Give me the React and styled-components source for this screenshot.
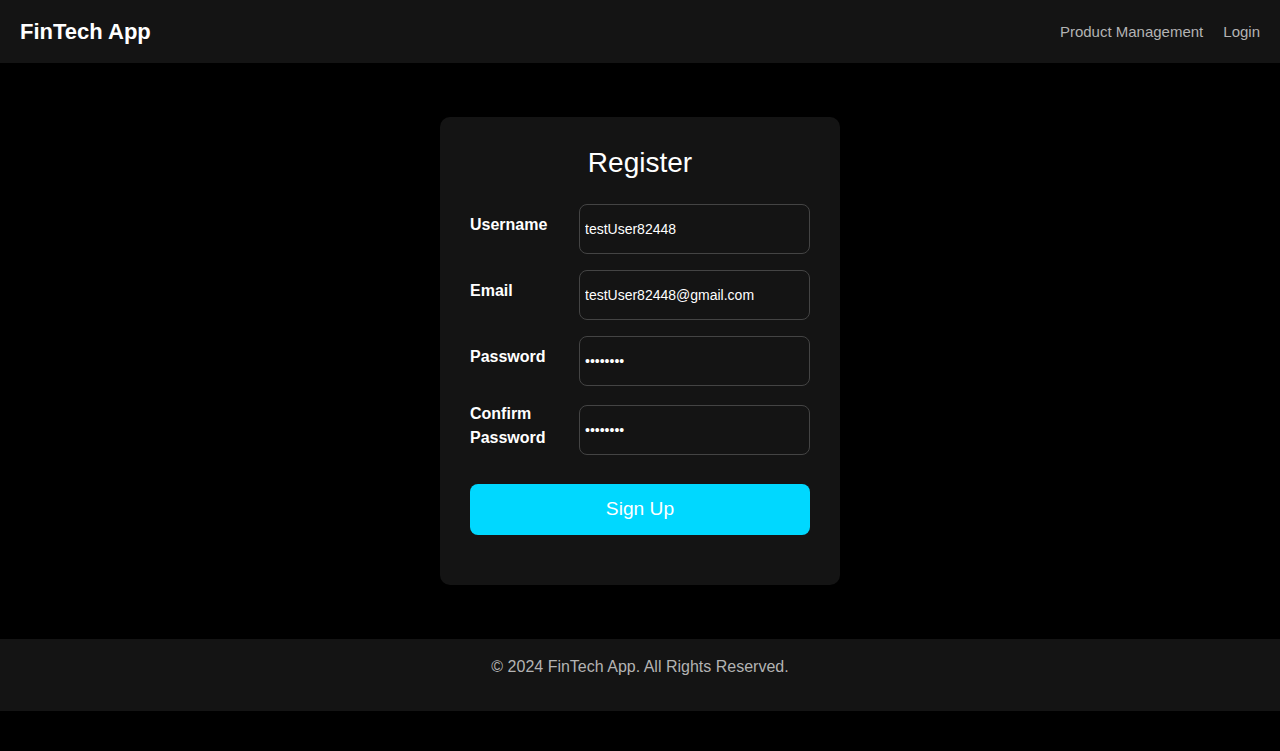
import React from 'react';
import styled, { createGlobalStyle } from 'styled-components';

const GlobalStyle = createGlobalStyle`
  * {
    box-sizing: border-box;
  }

  body {
    margin: 0;
    background-color: #000;
    color: #fff;
    font-family: "Liberation Sans", Arial, sans-serif;
  }
`;

const Header = styled.header`
  display: flex;
  justify-content: space-between;
  align-items: center;
  height: 63px;
  padding: 0 20px;
  background-color: #141414;
`;

const Brand = styled.div`
  font-size: 22px;
  font-weight: bold;
  color: #fff;
`;

const Nav = styled.nav`
  display: flex;
  gap: 20px;
`;

const NavLink = styled.a`
  font-size: 15px;
  color: #b3b3b3;
  text-decoration: none;
  cursor: pointer;
`;

const Main = styled.main`
  display: flex;
  justify-content: center;
  padding: 54px 0;
`;

const Card = styled.div`
  width: 400px;
  padding: 30px 30px 50px;
  border-radius: 10px;
  background-color: #141414;
`;

const Title = styled.h2`
  margin: 0 0 25px;
  font-size: 28px;
  font-weight: normal;
  line-height: 32px;
  text-align: center;
  color: #fff;
`;

const Form = styled.form`
  display: flex;
  flex-direction: column;
  gap: 16px;
`;

const Row = styled.div`
  display: flex;
  align-items: center;
`;

const Label = styled.label`
  flex: 0 0 109px;
  margin-bottom: 8px;
  font-size: 16px;
  font-weight: bold;
  line-height: 24px;
  color: #fff;
`;

const Input = styled.input`
  flex: 1;
  min-width: 0;
  height: 50px;
  padding: 0 5px;
  border: 1px solid #444;
  border-radius: 8px;
  background-color: #141414;
  color: #fff;
  font-family: "Liberation Sans", Arial, sans-serif;
  font-size: 14px;
  outline: none;
`;

const Button = styled.button`
  margin-top: 10px;
  width: 100%;
  padding: 13px 0 15px;
  border: none;
  border-radius: 8px;
  background-color: #00d8ff;
  color: #fff;
  font-family: "Liberation Sans", Arial, sans-serif;
  font-size: 19.2px;
  line-height: 23px;
  cursor: pointer;
`;

const Footer = styled.footer`
  padding: 19px 0 35px;
  background-color: #141414;
  text-align: center;
  font-size: 16px;
  line-height: 18px;
  color: #b3b3b3;
`;

const fields = [
  { id: 'username', label: 'Username', type: 'text', value: 'testUser82448' },
  { id: 'email', label: 'Email', type: 'email', value: 'testUser82448@gmail.com' },
  { id: 'password', label: 'Password', type: 'password', value: 'Passw0rd' },
  { id: 'confirm', label: 'Confirm Password', type: 'password', value: 'Passw0rd' },
];

const App = () => {
  return (
    <>
      <GlobalStyle />
      <Header>
        <Brand>FinTech App</Brand>
        <Nav>
          <NavLink>Product Management</NavLink>
          <NavLink>Login</NavLink>
        </Nav>
      </Header>
      <Main>
        <Card>
          <Title>Register</Title>
          <Form onSubmit={(e) => e.preventDefault()}>
            {fields.map((f) => (
              <Row key={f.id}>
                <Label htmlFor={f.id}>{f.label}</Label>
                <Input id={f.id} type={f.type} defaultValue={f.value} />
              </Row>
            ))}
            <Button type="submit">Sign Up</Button>
          </Form>
        </Card>
      </Main>
      <Footer>© 2024 FinTech App. All Rights Reserved.</Footer>
    </>
  );
};

export default App;
